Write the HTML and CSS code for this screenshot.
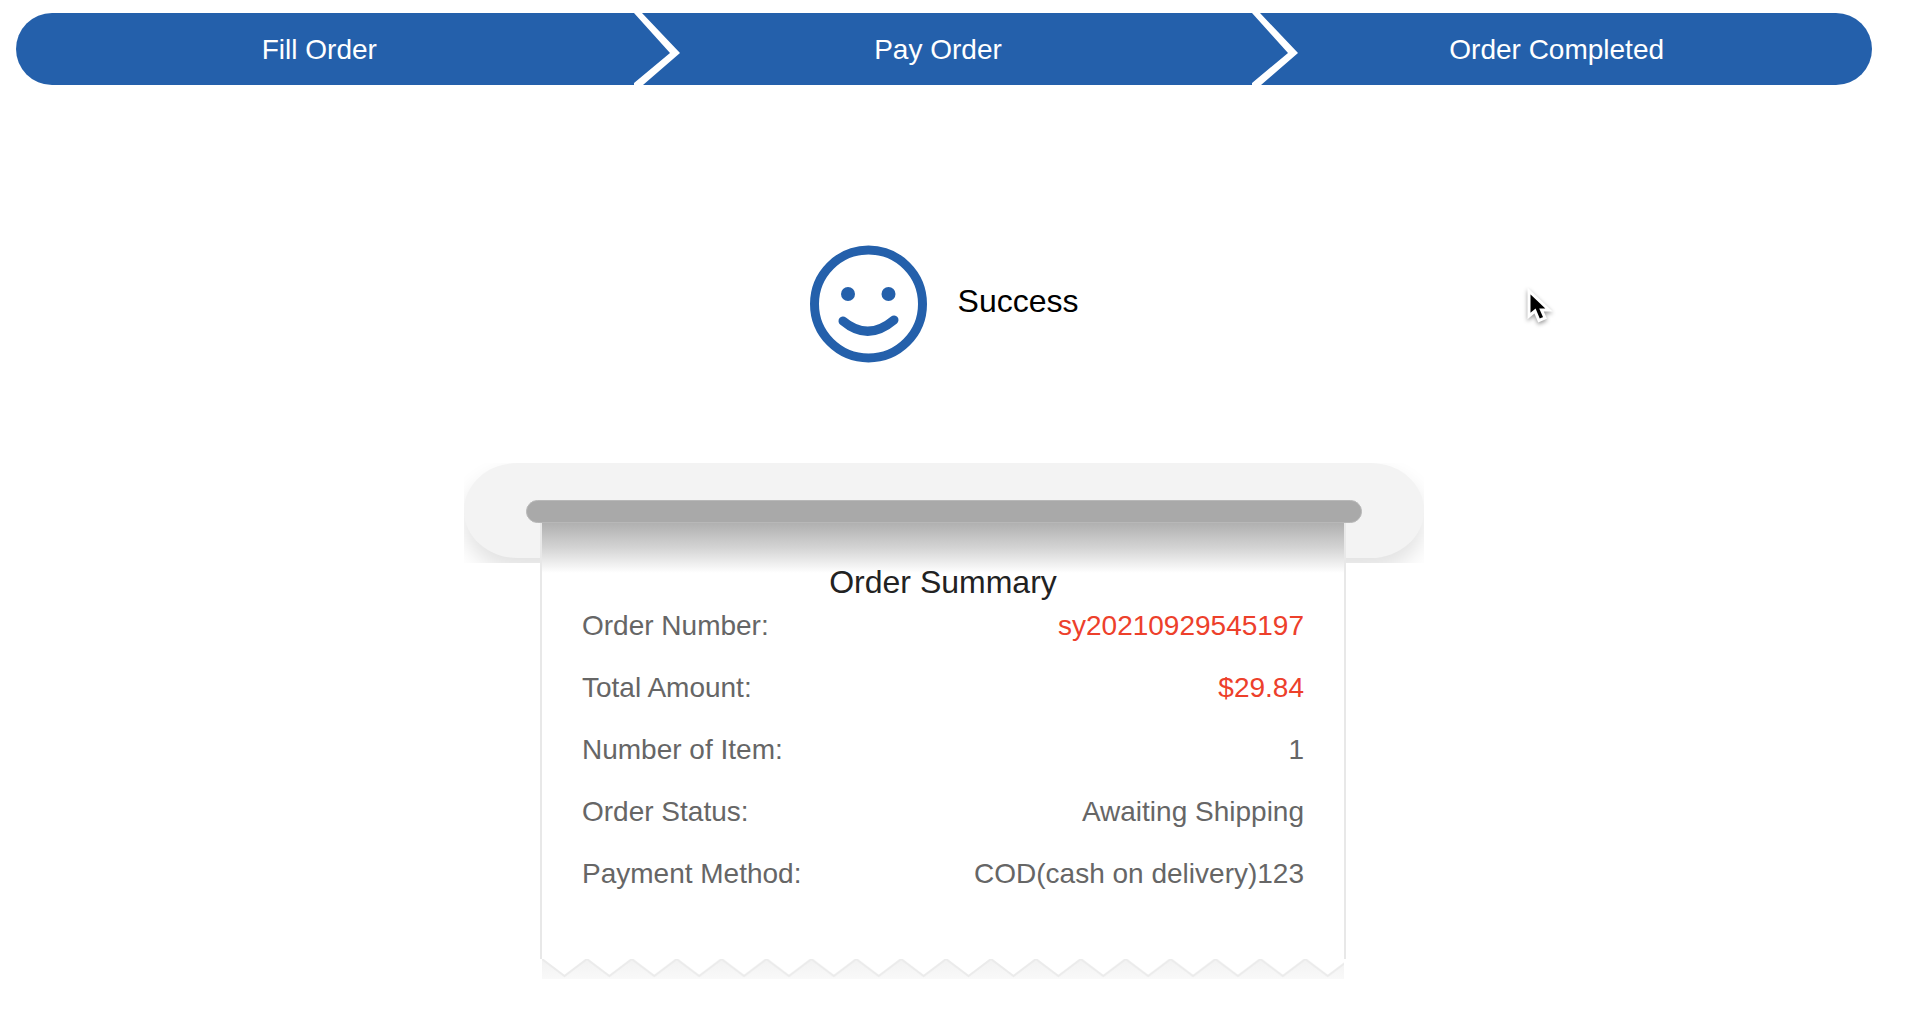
FILE: index.html
```html
<!DOCTYPE html>
<html lang="en">
<head>
<meta charset="utf-8">
<title>Order Completed</title>
<link rel="stylesheet" href="styles.css">
</head>
<body>
<main class="page">
  <ol class="steps">
    <li class="step">Fill Order</li>
    <li class="step">
      <svg class="chevron" viewBox="0 0 46 72" aria-hidden="true"><path d="M0 0H8L46 40L9 72H0V70L36 40Z"/></svg>
      Pay Order
    </li>
    <li class="step">
      <svg class="chevron" viewBox="0 0 46 72" aria-hidden="true"><path d="M0 0H8L46 40L9 72H0V70L36 40Z"/></svg>
      Order Completed
    </li>
  </ol>

  <section class="result">
    <svg class="smiley" viewBox="0 0 118 118" aria-hidden="true">
      <circle class="line" cx="58.500" cy="59" r="54"/>
      <circle class="eye" cx="38" cy="49" r="7"/>
      <circle class="eye" cx="78.500" cy="49" r="7"/>
      <path class="line" d="M33 76Q58 97 84 75"/>
    </svg>
    <h1 class="result-text">Success</h1>
  </section>

  <section class="receipt">
    <div class="printer">
      <div class="shell"><div class="slot"></div></div>
    </div>
    <div class="paper">
      <h2 class="title">Order Summary</h2>
      <dl class="rows">
        <div class="row"><dt>Order Number:</dt><dd class="accent">sy20210929545197</dd></div>
        <div class="row"><dt>Total Amount:</dt><dd class="accent">$29.84</dd></div>
        <div class="row"><dt>Number of Item:</dt><dd>1</dd></div>
        <div class="row"><dt>Order Status:</dt><dd>Awaiting Shipping</dd></div>
        <div class="row"><dt>Payment Method:</dt><dd>COD(cash on delivery)123</dd></div>
      </dl>
    </div>
    <svg class="tear" aria-hidden="true">
      <defs>
        <linearGradient id="fade" x1="0" y1="0" x2="0" y2="1">
          <stop offset="0" stop-color="#f2f2f2"/>
          <stop offset="1" stop-color="#f9f9f9"/>
        </linearGradient>
        <pattern id="teeth" width="44.900" height="20" patternUnits="userSpaceOnUse">
          <path d="M0 0L22.450 17L44.900 0V20H0Z" fill="url(#fade)"/>
          <path d="M-2 -1.500L0 0L22.450 17L44.900 0L47 -1.500" fill="none" stroke="#ebebeb" stroke-width="2"/>
        </pattern>
      </defs>
      <rect width="100%" height="20" fill="url(#teeth)"/>
    </svg>
  </section>

  <svg class="cursor" viewBox="0 0 28 40" aria-hidden="true"><path d="M3 4V29L9 24L13 33.500L19 31L15.500 23H23Z"/></svg>
</main>
</body>
</html>
```

FILE: styles.css
```css
* {
  box-sizing: border-box;
}

body {
  margin: 0;
  background: #fff;
  color: #000;
  font-family: "Liberation Sans", Arial, Helvetica, sans-serif;
  font-size: 28px;
}

.page {
  position: relative;
  padding: 13px 36px 0 16px;
}

.steps {
  display: grid;
  grid-template-columns: repeat(3, 1fr);
  margin: 0;
  padding: 0;
  list-style: none;
  border-radius: 36px;
  background: #2460ab;
  color: #fff;
}

.step {
  position: relative;
  padding: 2px 12px 0 0;
  line-height: 70px;
  text-align: center;
}

/* The arrow divider lies over the start of its step. */
.chevron {
  position: absolute;
  top: 0;
  left: -1px;
  width: 46px;
  height: 72px;
  fill: #fff;
}

.result {
  display: flex;
  justify-content: center;
  align-items: center;
  gap: 30px;
  margin: 160px 0 100px;
}

.smiley {
  width: 118px;
  height: 118px;
}

.smiley .line {
  fill: none;
  stroke: #2460ab;
  stroke-width: 9px;
  stroke-linecap: round;
}

.smiley .eye {
  fill: #2460ab;
}

.result-text {
  margin: 0;
  padding-bottom: 6px;
  font-size: 32px;
  font-weight: 400;
}

.receipt {
  max-width: 960px;
  margin: 0 auto;
}

.printer {
  height: 100px;
  overflow: hidden;
}

.shell {
  height: 95px;
  padding: 37px 62px 0;
  border-radius: 54px / 48px;
  background: #f3f3f3;
  box-shadow: 0 12px 22px rgba(0, 0, 0, 0.12);
}

.slot {
  height: 23px;
  border: 1px solid #b8b8b8;
  border-radius: 12px;
  background: #a9a9a9;
}

.paper {
  position: relative;
  margin: -40px 78px 0 76px;
  padding: 36px 40px 65px;
  border: solid #e8e8e8;
  border-width: 0 2px;
  background: linear-gradient(#b0b0b0, #d4d4d4 25px, #fff 50px) no-repeat #fff;
}

.title {
  margin: 0 0 1px;
  color: #222;
  font-size: 32px;
  font-weight: 400;
  line-height: 46px;
  text-align: center;
}

.rows {
  display: grid;
  gap: 22px;
  margin: 0;
  color: #666;
  line-height: 40px;
}

.row {
  display: flex;
  justify-content: space-between;
}

.row dd {
  margin: 0;
}

.row .accent {
  color: #ed402b;
}

.tear {
  display: block;
  width: calc(100% - 158px);
  height: 20px;
  margin-left: 78px;
}

/* Pointer floating over the page. */
.cursor {
  position: absolute;
  top: 287px;
  left: 80%;
  width: 28px;
  height: 40px;
  overflow: visible;
  fill: #000;
  stroke: #fff;
  stroke-width: 3px;
  filter: drop-shadow(0 2px 2px rgba(0, 0, 0, 0.4));
}
```
